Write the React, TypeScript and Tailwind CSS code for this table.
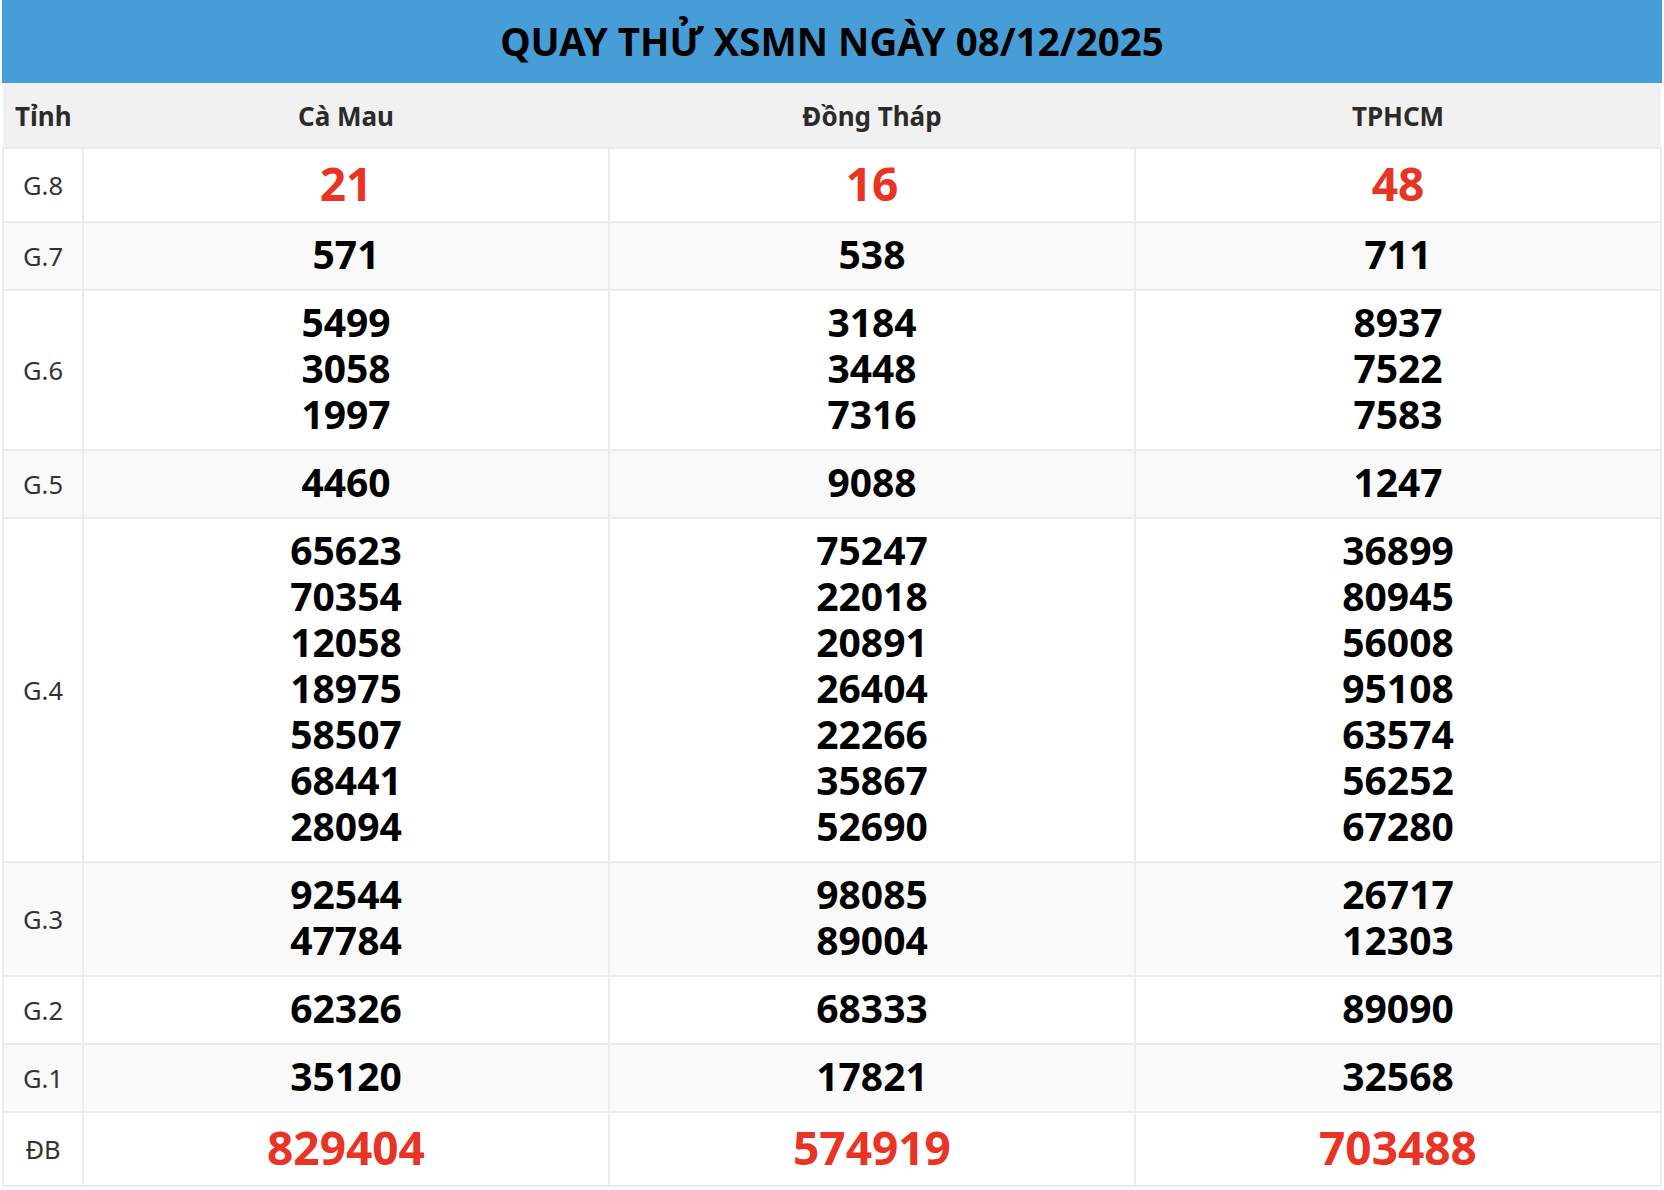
import React from 'react';

type Row = {
  label: string;
  values: string[][];
  big?: boolean;
};

const provinces = ['Cà Mau', 'Đồng Tháp', 'TPHCM'];

const rows: Row[] = [
  { label: 'G.8', values: [['21'], ['16'], ['48']], big: true },
  { label: 'G.7', values: [['571'], ['538'], ['711']] },
  {
    label: 'G.6',
    values: [
      ['5499', '3058', '1997'],
      ['3184', '3448', '7316'],
      ['8937', '7522', '7583'],
    ],
  },
  { label: 'G.5', values: [['4460'], ['9088'], ['1247']] },
  {
    label: 'G.4',
    values: [
      ['65623', '70354', '12058', '18975', '58507', '68441', '28094'],
      ['75247', '22018', '20891', '26404', '22266', '35867', '52690'],
      ['36899', '80945', '56008', '95108', '63574', '56252', '67280'],
    ],
  },
  {
    label: 'G.3',
    values: [
      ['92544', '47784'],
      ['98085', '89004'],
      ['26717', '12303'],
    ],
  },
  { label: 'G.2', values: [['62326'], ['68333'], ['89090']] },
  { label: 'G.1', values: [['35120'], ['17821'], ['32568']] },
  { label: 'ĐB', values: [['829404'], ['574919'], ['703488']], big: true },
];

export default function App() {
  return (
    <div className="w-[1664px] bg-white px-0.5 pb-[5px] font-['Noto_Sans',sans-serif]">
      <div className="flex h-[83px] items-center justify-center bg-[#479dd6]">
        <h1 className="text-[38.5px] font-bold leading-none text-black">QUAY THỬ XSMN NGÀY 08/12/2025</h1>
      </div>
      <table className="w-full table-fixed border-collapse">
        <colgroup>
          <col className="w-[80px]" />
          <col />
          <col />
          <col />
        </colgroup>
        <thead>
          <tr className="h-[65px] bg-[#f1f1f1] text-[26px] font-bold text-[#2b2b2b]">
            <th className="px-[12px] pt-[3px] text-left">Tỉnh</th>
            {provinces.map((p) => (
              <th key={p} className="pt-[3px] text-center">
                {p}
              </th>
            ))}
          </tr>
        </thead>
        <tbody>
          {rows.map((row, i) => (
            <tr key={row.label} className={i % 2 === 0 ? 'bg-white' : 'bg-[#f9f9f9]'}>
              <td className="border-2 border-[#ececec] text-center text-[25.5px] text-[#333]">{row.label}</td>
              {row.values.map((nums, j) => (
                <td
                  key={j}
                  className={`border-2 border-[#ececec] text-center font-bold ${
                    row.big
                      ? 'pt-[11px] pb-[15px] text-[46px] leading-[46px] text-[#e93324]'
                      : 'pt-[8px] pb-[12px] text-[39px] leading-[46px] text-black'
                  }`}
                >
                  {nums.map((n) => (
                    <div key={n}>{n}</div>
                  ))}
                </td>
              ))}
            </tr>
          ))}
        </tbody>
      </table>
    </div>
  );
}
